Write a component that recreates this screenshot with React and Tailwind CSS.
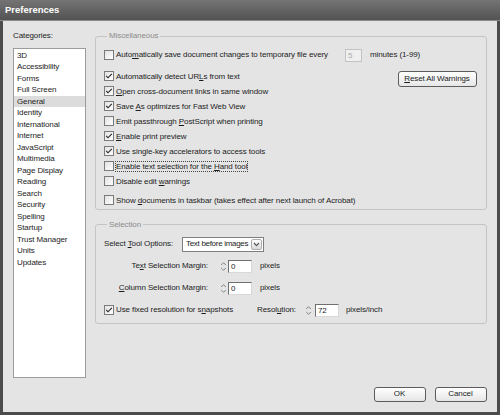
import React from "react";

const categories = [
  "3D", "Accessibility", "Forms", "Full Screen", "General", "Identity",
  "International", "Internet", "JavaScript", "Multimedia", "Page Display",
  "Reading", "Search", "Security", "Spelling", "Startup", "Trust Manager",
  "Units", "Updates",
];

function U({ children }) {
  return <span className="underline underline-offset-[1px] decoration-[0.7px]">{children}</span>;
}

function Check({ checked }) {
  return (
    <span className="w-[10px] h-[10px] shrink-0 border border-[#7b7b7b] bg-linear-to-br from-[#e2e2e2] to-white flex items-center justify-center">
      {checked && (
        <svg width="8" height="8" viewBox="0 0 8 8">
          <path d="M1.2 3.9 L3 5.8 L6.8 1.8" fill="none" stroke="#222" strokeWidth="1.1" />
        </svg>
      )}
    </span>
  );
}

function CheckRow({ checked, focus, children }) {
  return (
    <div className="h-[15px] flex items-center">
      <Check checked={checked} />
      <span className={focus ? "ml-[2px] leading-[9px] outline-1 outline-dotted outline-[#444]" : "ml-[2px] leading-[9px]"}>
        {children}
      </span>
    </div>
  );
}

function Spin() {
  return (
    <svg width="7" height="13" viewBox="0 0 7 13" className="shrink-0">
      <path d="M1.2 5 L3.5 2.7 L5.8 5" fill="none" stroke="#777" strokeWidth="0.9" />
      <path d="M1.2 8 L3.5 10.3 L5.8 8" fill="none" stroke="#777" strokeWidth="0.9" />
    </svg>
  );
}

function NumBox({ value }) {
  return (
    <div className="w-[24px] h-[13px] border-l border-t border-[#6f6f6f] border-r border-b border-r-[#d8d8d8] border-b-[#d8d8d8] bg-white pl-[2px] leading-[11px]">
      {value}
    </div>
  );
}

function Button({ children, className }) {
  return (
    <button
      type="button"
      className={`border border-[#5c5c5c] rounded-[3px] bg-linear-to-b from-white to-[#e6e6e6] leading-[10px] flex items-center justify-center ${className}`}
    >
      {children}
    </button>
  );
}

export default function App() {
  return (
    <div className="w-[500px] h-[415px] bg-[#4b4b4b] flex flex-col text-[8px] tracking-[-0.1px] text-[#1c1c1c] font-['Liberation_Sans',Arial,sans-serif]">
      <header className="h-[21px] shrink-0 bg-linear-to-b from-[#747474] to-[#535353] flex items-center pl-[5px] border-b border-[#8a8a8a]">
        <span className="text-white font-bold text-[9.5px] tracking-[0px]">Preferences</span>
      </header>

      <div className="flex-1 mx-[3px] mb-[3px] bg-[#e4e4e4] pt-[10px] pl-[10px] pr-[10.5px] flex flex-col">
        <div className="h-[347px] flex gap-[9px]">
          <div className="w-[73px] flex flex-col">
            <div className="h-[10px] leading-[10px]">Categories:</div>
            <ul className="mt-[6.5px] h-[330.5px] border border-[#9c9c9c] bg-white pt-[1px]">
              {categories.map((c) => (
                <li
                  key={c}
                  className={c === "General" ? "h-[11.5px] leading-[11.5px] pl-[3px] bg-[#dcdcdc]" : "h-[11.5px] leading-[11.5px] pl-[3px]"}
                >
                  {c}
                </li>
              ))}
            </ul>
          </div>

          <div className="flex-1 flex flex-col">
            <fieldset className="border border-[#c4c4c4] rounded-[3px] px-[8px] pt-[6.5px] pb-[1px]">
              <legend className="ml-[3px] px-[2px] leading-[10px] text-[#8c8c8c]">Miscellaneous</legend>

              <div className="h-[15px] flex items-center">
                <div className="w-[241px] flex items-center">
                  <Check />
                  <span className="ml-[2px]">Auto<U>m</U>atically save document changes to temporary file every</span>
                </div>
                <div className="w-[17px] h-[13px] border border-[#c2c2c2] bg-[#efefef] text-[#aaaaaa] pl-[2px] leading-[11px]">5</div>
                <span className="ml-[8px]">minutes (1-99)</span>
              </div>

              <div className="mt-[6px] flex justify-between">
                <div className="flex flex-col">
                  <CheckRow checked>Automatically detect UR<U>L</U>s from text</CheckRow>
                  <CheckRow checked><U>O</U>pen cross-document links in same window</CheckRow>
                </div>
                <Button className="mt-[2.5px] mr-[1px] w-[79px] h-[16px]"><span><U>R</U>eset All Warnings</span></Button>
              </div>
              <CheckRow checked>Save <U>A</U>s optimizes for Fast Web View</CheckRow>
              <CheckRow>Emit passthrough <U>P</U>ostScript when printing</CheckRow>
              <CheckRow checked><U>E</U>nable print preview</CheckRow>
              <CheckRow checked>Use single-key accelerators to access tools</CheckRow>
              <CheckRow focus>Enable text selection for the <U>H</U>and tool</CheckRow>
              <CheckRow>Disable edit <U>w</U>arnings</CheckRow>
              <div className="mt-[4px]">
                <CheckRow>Show <U>d</U>ocuments in taskbar (takes effect after next launch of Acrobat)</CheckRow>
              </div>
            </fieldset>

            <fieldset className="mt-[10px] border border-[#c4c4c4] rounded-[3px] px-[8px] pt-[7px] pb-[5px] flex flex-col gap-[7px]">
              <legend className="ml-[3px] px-[2px] leading-[10px] text-[#8c8c8c]">Selection</legend>

              <div className="h-[15px] flex items-center">
                <span className="w-[78px]">Select <U>T</U>ool Options:</span>
                <div className="w-[82px] h-[15px] border border-[#7f7f7f] bg-white flex items-center justify-between pl-[3px] pr-[1px]">
                  <span className="whitespace-nowrap tracking-[-0.3px]">Text before images</span>
                  <span className="w-[11px] h-[11px] shrink-0 border border-[#b0b0b0] rounded-[2px] bg-linear-to-b from-white to-[#d9d9d9] flex items-center justify-center">
                    <svg width="7" height="5" viewBox="0 0 7 5">
                      <path d="M1 1 L3.5 3.6 L6 1" fill="none" stroke="#555" strokeWidth="1.1" />
                    </svg>
                  </span>
                </div>
              </div>

              <div className="h-[15px] flex items-center">
                <span className="w-[104px] text-right">Te<U>x</U>t Selection Margin:</span>
                <span className="ml-[12px]"><Spin /></span>
                <span className="ml-[1px]"><NumBox value="0" /></span>
                <span className="ml-[8px]">pixels</span>
              </div>

              <div className="h-[15px] flex items-center">
                <span className="w-[104px] text-right"><U>C</U>olumn Selection Margin:</span>
                <span className="ml-[12px]"><Spin /></span>
                <span className="ml-[1px]"><NumBox value="0" /></span>
                <span className="ml-[8px]">pixels</span>
              </div>

              <div className="h-[15px] flex items-center">
                <div className="w-[153px] flex items-center">
                  <Check checked />
                  <span className="ml-[2px]">Use fixed resolution for s<U>n</U>apshots</span>
                </div>
                <span className="w-[48px]">Resol<U>u</U>tion:</span>
                <Spin />
                <span className="ml-[3px]"><NumBox value="72" /></span>
                <span className="ml-[7px]">pixels/inch</span>
              </div>
            </fieldset>
          </div>
        </div>

        <div className="mt-[8.5px] flex justify-end gap-[9px]">
          <Button className="w-[52px] h-[15.5px]">OK</Button>
          <Button className="w-[52px] h-[15.5px]">Cancel</Button>
        </div>
      </div>
    </div>
  );
}
